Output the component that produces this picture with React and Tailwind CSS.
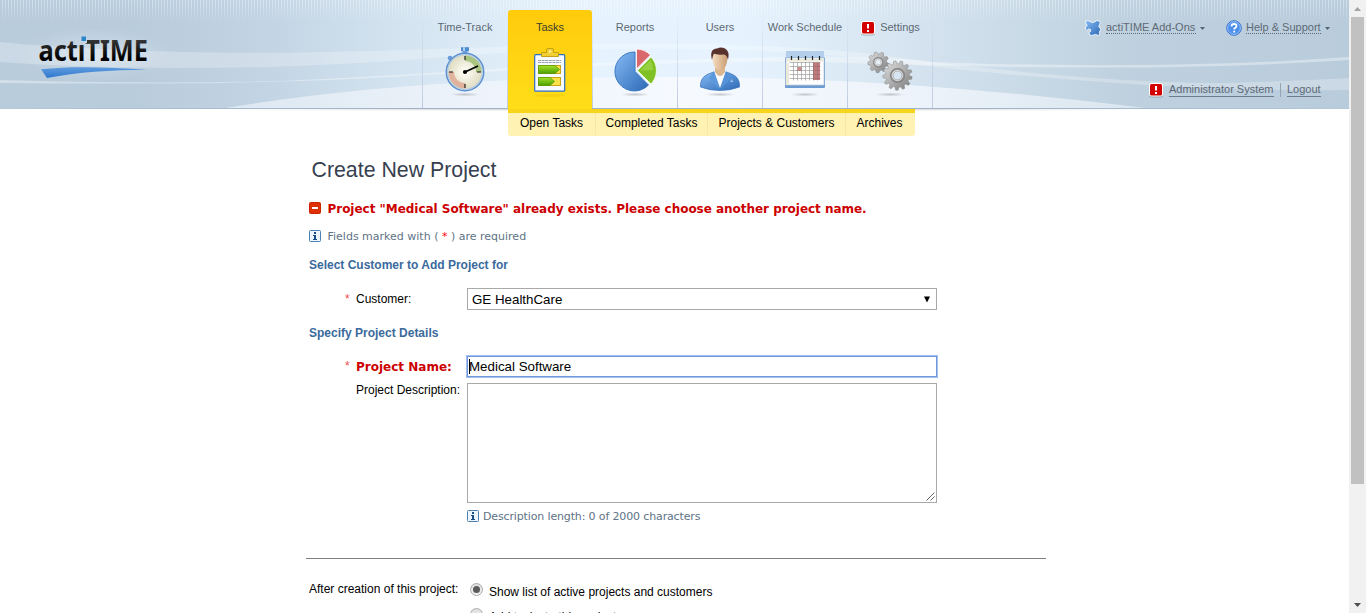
import React from "react";

const ARIAL = "font-['Liberation_Sans',Arial,sans-serif]";
const VERDANA = "font-['DejaVu_Sans',Verdana,sans-serif]";

function HeaderBackdrop() {
  return (
    <svg className="absolute inset-0" width="1349" height="113" viewBox="0 0 1349 113" aria-hidden="true">
      <defs>
        <linearGradient id="sky" x1="0" x2="1" y1="0" y2="0">
          <stop offset="0" stopColor="#b9ccdc" />
          <stop offset=".1" stopColor="#b9ccdc" />
          <stop offset=".2" stopColor="#c3d4e4" />
          <stop offset=".3" stopColor="#d4e4f0" />
          <stop offset=".43" stopColor="#e6f3fe" />
          <stop offset=".55" stopColor="#e6f3fe" />
          <stop offset=".69" stopColor="#d3e2ee" />
          <stop offset=".83" stopColor="#bfd1df" />
          <stop offset="1" stopColor="#b9ccdc" />
        </linearGradient>
        <linearGradient id="fade" x1="0" x2="0" y1="0" y2="1">
          <stop offset="0" stopColor="#fff" stopOpacity=".42" />
          <stop offset="1" stopColor="#fff" stopOpacity="0" />
        </linearGradient>
        <pattern id="stripes" width="3" height="22" patternUnits="userSpaceOnUse">
          <rect x="2" width="1" height="22" fill="url(#fade)" />
        </pattern>
        <linearGradient id="hill" x1="0" x2="1" y1="0" y2="0">
          <stop offset="0" stopColor="#dce7f1" />
          <stop offset=".25" stopColor="#ecf2fa" />
          <stop offset=".5" stopColor="#f6faff" />
          <stop offset=".75" stopColor="#edf3fa" />
          <stop offset="1" stopColor="#d9e5ef" />
        </linearGradient>
        <linearGradient id="edge" x1="0" x2="1" y1="0" y2="0">
          <stop offset="0" stopColor="#b4c8da" />
          <stop offset=".3" stopColor="#9eb2c8" />
          <stop offset=".72" stopColor="#9eb2c8" />
          <stop offset="1" stopColor="#b4c8da" />
        </linearGradient>
        <linearGradient id="shade" x1="0" x2="1" y1="0" y2="0">
          <stop offset="0" stopColor="#d4d4d4" stopOpacity="0" />
          <stop offset=".3" stopColor="#d4d4d4" />
          <stop offset=".7" stopColor="#d4d4d4" />
          <stop offset="1" stopColor="#d4d4d4" stopOpacity="0" />
        </linearGradient>
        <radialGradient id="halo">
          <stop offset="0" stopColor="#fff" stopOpacity=".32" />
          <stop offset="1" stopColor="#fff" stopOpacity="0" />
        </radialGradient>
      </defs>
      <rect width="1349" height="109" fill="url(#sky)" />
      <rect width="1349" height="22" fill="url(#stripes)" />
      <path d="M0 42C70 49 180 53 260 53C390 52 530 44 640 44C780 44 850 50 932 62C1010 71 1110 82 1220 83C1270 82 1310 80 1349 78V90C1220 92 1050 82 850 57C720 45 560 46 420 59C330 66 250 68 170 68C110 67 50 66 0 62Z" fill="#fff" opacity=".25" />
      <path d="M0 80C100 83 200 83 280 81C440 74 560 63 680 60C800 56 870 55 932 62C1040 66 1200 68 1349 57V60C1200 70 1040 69 850 63C720 58 580 67 420 75C330 82 180 85 0 83Z" fill="#fff" opacity=".36" />
      <path d="M225 108C340 89 480 77 670 77C840 77 980 88 1145 108Z" fill="url(#hill)" />
      <ellipse cx="95" cy="54" rx="78" ry="27" fill="url(#halo)" />
      <rect y="108" width="1349" height="1" fill="url(#edge)" />
      <rect x="230" y="109" width="910" height="1" fill="url(#shade)" opacity=".8" />
      <rect x="230" y="110" width="910" height="1" fill="url(#shade)" opacity=".35" />
    </svg>
  );
}

function Logo() {
  return (
    <svg width="130" height="60" viewBox="30 25 130 60" role="img" className="overflow-visible">
      <defs>
        <linearGradient id="ink" x1="0" x2="0" y1="0" y2="1">
          <stop offset=".2" stopColor="#3c3c3c" />
          <stop offset=".75" stopColor="#000" />
        </linearGradient>
        <linearGradient id="swoosh" x1="0" x2="0" y1="0" y2="1">
          <stop offset="0" stopColor="#5e9bdd" />
          <stop offset="1" stopColor="#2f78cf" />
        </linearGradient>
        <clipPath id="undot"><path d="M30 25H79V43H87V25H160V85H30Z" /></clipPath>
      </defs>
      <g clipPath="url(#undot)">
        <text x="38.5" y="60.5" fontSize="29" fontWeight="700" fill="url(#ink)" textLength="109.5" lengthAdjust="spacingAndGlyphs" className="font-['Noto_Sans',sans-serif]">actiTIME</text>
      </g>
      <path d="M81.500 36.500h4.500v4.500h-4.500z" fill="#2b87cb" />
      <path d="M41 69.300C70 66 108 67 147 69.700C110 70 78 72 47 78Z" fill="url(#swoosh)" />
    </svg>
  );
}

function Shadow() {
  return <ellipse cx="24" cy="50.500" rx="15" ry="2" fill="url(#iconShadow)" />;
}

function IconDefs() {
  return (
    <svg width="0" height="0" className="absolute" aria-hidden="true">
      <defs>
        <radialGradient id="iconShadow">
          <stop offset="0" stopColor="#555" stopOpacity=".3" />
          <stop offset="1" stopColor="#555" stopOpacity="0" />
        </radialGradient>
        <linearGradient id="green" x1="0" x2="0" y1="0" y2="1">
          <stop offset="0" stopColor="#a5e02c" />
          <stop offset="1" stopColor="#4c9f05" />
        </linearGradient>
        <linearGradient id="blue" x1="0" x2="1" y1="0" y2="1">
          <stop offset="0" stopColor="#85baf4" />
          <stop offset="1" stopColor="#2c69b5" />
        </linearGradient>
        <linearGradient id="metal" x1="0" x2="1" y1="0" y2="1">
          <stop offset="0" stopColor="#e4e4e4" />
          <stop offset="1" stopColor="#7a7a7a" />
        </linearGradient>
        <radialGradient id="face">
          <stop offset="0" stopColor="#fffff8" />
          <stop offset="1" stopColor="#dcd9bd" />
        </radialGradient>
        <linearGradient id="skin" x1="0" x2="1" y1="0" y2="0">
          <stop offset="0" stopColor="#f6dcc0" />
          <stop offset="1" stopColor="#c99d73" />
        </linearGradient>
      </defs>
    </svg>
  );
}

function Stopwatch() {
  return (
    <svg width="48" height="54" viewBox="0 0 48 54">
      <Shadow />
      <path d="M20 3.200h8v4h-8z" fill="#4f8bcf" /><path d="M22 3.200h2v4h-2z" fill="#acd0f4" />
      <path d="M21.500 7h5v3h-5z" fill="#6b9fd9" />
      <circle cx="9" cy="14" r="2.300" fill="#659cdb" />
      <circle cx="24" cy="28" r="18.700" fill="url(#face)" stroke="#5b90d3" strokeWidth="1.500" />
      <circle cx="24" cy="28" r="17.300" fill="none" stroke="#a8cbf2" />
      <path d="M24 11.500A16.500 16.500 0 0 1 40.500 28H35A11 11 0 0 0 24 17Z" fill="#9dbf72" opacity=".85" />
      <path d="M24 44.500A16.500 16.500 0 0 1 7.500 28H13A11 11 0 0 0 24 39Z" fill="#dfa995" opacity=".85" />
      <path d="M24 12v4M24 40v4M8 28h4M36 28h4" stroke="#111" strokeWidth="1.100" />
      <path d="M24 28L37 22" stroke="#000" strokeWidth="1.800" /><circle cx="24" cy="28" r="2.100" />
    </svg>
  );
}

function Clipboard() {
  return (
    <svg width="48" height="54" viewBox="0 0 48 54">
      <ellipse cx="24" cy="51.500" rx="15" ry="1.500" fill="#b78a00" opacity=".12" />
      <rect x="8.700" y="10.700" width="30" height="36.500" rx="1" fill="#f7faff" stroke="#2d6fc0" strokeWidth="1.200" />
      <path d="M15.500 12.500V8.500h5V6q0-1.500 1.500-1.500h4q1.500 0 1.500 1.500v2.500h5v4Z" fill="#f0cf35" stroke="#c29a0a" strokeWidth=".9" />
      <circle cx="24" cy="7.500" r="1.300" fill="#fff3a6" />
      <path d="M12 16.500h23M12 18.500h23" stroke="#9099a5" strokeWidth=".9" strokeDasharray="3 .6" />
      <rect x="12.500" y="21.500" width="22" height="8" fill="#fbe14b" stroke="#cda514" />
      <path d="M12.500 21.500H29L33.500 25.500L29 29.500H12.500Z" fill="url(#green)" stroke="#4b9a05" strokeWidth=".7" />
      <rect x="12.500" y="33.500" width="22" height="8" fill="#fbe14b" stroke="#cda514" />
      <path d="M12.500 33.500H24L28.500 37.500L24 41.500H12.500Z" fill="url(#green)" stroke="#4b9a05" strokeWidth=".7" />
    </svg>
  );
}

function Pie() {
  return (
    <svg width="48" height="54" viewBox="0 0 48 54">
      <Shadow />
      <path d="M24 27.500V8A19.500 19.500 0 1 0 37.500 41Z" fill="url(#blue)" stroke="#3b78c2" />
      <path d="M25.500 25V5A20 20 0 0 1 39.500 11Z" fill="#d9686d" stroke="#fff" strokeWidth=".8" />
      <path d="M26.500 26.500L40 13A19.500 19.500 0 0 1 40 40Z" fill="#7fc124" stroke="#f8fff0" strokeWidth=".8" />
      <path d="M29 26.500L39.500 16A17 17 0 0 1 42 26Z" fill="#a6da55" opacity=".6" />
    </svg>
  );
}

function Person() {
  return (
    <svg width="48" height="54" viewBox="0 0 48 54">
      <Shadow />
      <path d="M4.500 43C4 34 9 30.500 18 28H30C39 30.500 44 34 43.500 43Q34 46.500 24 46.500Q14 46.500 4.500 43Z" fill="url(#blue)" stroke="#3772b7" strokeWidth=".7" />
      <path d="M18 27L24 44L30 27Z" fill="#f9fbff" />
      <path d="M18 27L23.500 45L13 34Z" fill="#5b98dc" /><path d="M30 27L24.500 45L35 34Z" fill="#5592d8" />
      <path d="M19 22h10v6q-5 8-10 0Z" fill="#dbb68f" />
      <path d="M16.500 10Q16 25 24 26.500Q32 25 31.500 10Q28 6 21 7Z" fill="url(#skin)" />
      <path d="M16 16Q13 5 21 4.500Q25 2.500 29 4.500Q34 7 32 16Q31 11 28 10.500Q20 11 18 9.500Q17 11 16 16Z" fill="#5a322d" />
      <path d="M34 38l3 0-1-3Z" fill="#9bc1ee" />
    </svg>
  );
}

function Calendar() {
  return (
    <svg width="48" height="54" viewBox="0 0 48 54">
      <Shadow />
      <rect x="5" y="7" width="38" height="37" fill="#b3cfec" />
      <path d="M4 13.500h40v29.500q0 1-1 1H5q-1 0-1-1Z" fill="#6d9bd0" />
      <path d="M5 14h38v27H5Z" fill="#fff" stroke="#b9cce2" strokeWidth=".8" />
      <path d="M8 19H4.800V41h3.200Z" fill="#ede9d8" />
      <path d="M5.500 14.500h37v3h-37z" fill="#ebe9da" />
      <path d="M32 18.500h7v17.500h-7z" fill="#ca777b" /><path d="M16.500 23h4v4h-4z" fill="#d28a8a" />
      <path d="M8.500 18.500h31M8.500 22.500h31M8.500 26.500h31M8.500 30.500h31M8.500 34.500h31M12.500 18v18.500M16.500 18v18.500M20.500 18v18.500M24.500 18v18.500M28.500 18v18.500M32.500 18v18.500M36.500 18v18.500" stroke="#747474" strokeWidth=".7" opacity=".7" />
      <path d="M10.500 12v4M17.500 12v4M24.500 12v4M31.500 12v4M38.500 12v4" stroke="#252525" strokeWidth="1.200" />
    </svg>
  );
}

function Gear({ x, y, r, hole, teeth }) {
  const d = [];
  for (let i = 0; i < teeth; i++) {
    const at = (f, q) => {
      const a = ((i + f) / teeth) * Math.PI * 2;
      return `${(x + Math.cos(a) * q).toFixed(2)} ${(y + Math.sin(a) * q).toFixed(2)}`;
    };
    d.push(at(0, r * 0.8), at(0.18, r), at(0.52, r), at(0.7, r * 0.8));
  }
  return (
    <g>
      <path d={`M${d.join("L")}ZM${x - hole} ${y}a${hole} ${hole} 0 1 0 ${hole * 2} 0a${hole} ${hole} 0 1 0 ${-hole * 2} 0Z`} fill="url(#metal)" fillRule="evenodd" stroke="#808080" strokeWidth=".5" />
      <circle cx={x} cy={y} r={hole + r * 0.16} fill="none" stroke="#858585" strokeWidth={r * 0.1} />
      <circle cx={x} cy={y} r={hole + r * 0.04} fill="none" stroke="#e5e5e5" strokeWidth=".8" />
    </g>
  );
}

function Gears() {
  return (
    <svg width="48" height="54" viewBox="0 0 48 54">
      <Shadow />
      <Gear x={12.300} y={18.300} r={10.500} hole={3} teeth={9} />
      <Gear x={31.500} y={31.500} r={14.700} hole={4.500} teeth={13} />
    </svg>
  );
}

function Alert() {
  return (
    <svg width="16" height="16" viewBox="0 0 16 16" className="shrink-0">
      <rect x="1" y="1.500" width="14" height="14" rx="2.500" fill="#000" opacity=".25" />
      <rect x="1" y="1" width="14" height="13.500" rx="2.500" fill="#fff" />
      <rect x="2" y="2" width="12" height="11.500" rx="1.500" fill="#d20000" />
      <path d="M7 4h2v4.500H7zM7 10h2v2H7z" fill="#fff" />
    </svg>
  );
}

function Info() {
  return (
    <svg width="12" height="12" viewBox="0 0 12 12" className="shrink-0">
      <rect x=".5" y=".5" width="11" height="11" rx="1" fill="#edf5fd" stroke="#4d80b0" />
      <path d="M5 2h2v2H5zM4 5h3v4h1v1H4V9h1V6H4z" fill="#174d87" />
    </svg>
  );
}

function Puzzle() {
  return (
    <svg width="18" height="18" viewBox="0 0 18 18" className="shrink-0">
      <path d="M1.500 2Q4 .8 6 2.500Q8.500 4.800 11 2.500Q12.500 .8 15.500 2Q17 3.500 15.500 5.500Q13.800 8 16 9Q17.500 10.500 16 12Q14.500 13.500 16 15Q15.500 17.200 13 16Q11.500 14.800 10 16Q7.500 17.200 5 15.500V13.500Q7.500 12.500 6.500 10.500Q4.500 9 3 11.500Q.5 10.500 1.500 8Q4.500 6.500 2 4.500Z" fill="url(#blue)" stroke="#eef5fc" />
    </svg>
  );
}

function Help() {
  return (
    <svg width="16" height="16" viewBox="0 0 16 16" className="shrink-0">
      <circle cx="8" cy="8" r="7.300" fill="#4f90ed" stroke="#3a70c8" />
      <circle cx="8" cy="8" r="6.400" fill="none" stroke="#a9cdfb" strokeWidth=".8" />
      <path d="M5.500 6.300Q5.700 4 8.100 4Q10.600 4 10.500 6Q10.400 7.200 9.200 7.900Q8.200 8.500 8.200 9.500M8.200 10.800v1.700" fill="none" stroke="#fff" strokeWidth="1.800" />
    </svg>
  );
}

function Caret() {
  return <svg width="5" height="3" viewBox="0 0 5 3" className="shrink-0"><path d="M0 0h5L2.500 3Z" fill="#56636f" /></svg>;
}

const TABS = [
  ["Time-Track", Stopwatch],
  ["Tasks", Clipboard],
  ["Reports", Pie],
  ["Users", Person],
  ["Work Schedule", Calendar],
  ["Settings", Gears],
];

function Tab({ label, Icon }) {
  const active = label === "Tasks";
  return (
    <div className="flex w-[85px] shrink-0 pt-2.5">
      <div className={`flex flex-1 flex-col items-center ${active ? "h-[103px] rounded-t-[3px] bg-linear-to-b from-[#ffcb0b] to-[#ffde18]" : "h-[98px]"}`}>
        <div className={`mt-[9px] flex h-4 items-center gap-1 whitespace-nowrap pt-px text-[11px] ${active ? "text-[#3c3c2c]" : "text-[#5d6975]"}`}>
          {label === "Settings" && <Alert />}
          <span>{label}</span>
        </div>
        <div className="mt-[9px] h-[54px]"><Icon /></div>
      </div>
      <div className="h-[98px] w-px bg-linear-to-b from-transparent to-[#bfcbe2]" />
    </div>
  );
}

function SubNav() {
  const items = [["Open Tasks", "w-[87px]"], ["Completed Tasks", "w-[112px]"], ["Projects & Customers", "w-[138px]"], ["Archives", "w-[68px]"]];
  return (
    <div className="ml-[508px] flex h-[27px] w-[407px] rounded-b-[3px] border-t-4 border-[#f8d51a] bg-[#fff2b2] text-[12px] text-black">
      {items.map(([t, w], i) => (
        <div key={t} className={`${w} flex h-[22px] items-center justify-center whitespace-nowrap pb-[3px] ${i ? "border-l border-[#f7e7a2]" : ""}`}>{t}</div>
      ))}
    </div>
  );
}

function Header() {
  return (
    <header className="relative h-[136px]">
      <HeaderBackdrop />
      <div className="relative flex h-[109px]">
        <div className="w-[422px] pl-[30px] pt-[25px]"><Logo /></div>
        <div className="mt-2.5 h-[98px] w-px bg-linear-to-b from-transparent to-[#bfcbe2]" />
        <nav className="flex">{TABS.map(([l, I]) => <Tab key={l} label={l} Icon={I} />)}</nav>
        <div className="flex flex-1 flex-col text-[11px] leading-[13px] text-[#5d6975]">
          <div className="flex h-9 items-end whitespace-nowrap pl-[151px]">
            <span className="-mb-px flex"><Puzzle /></span>
            <span className="mb-[2px] ml-1 w-[90px] border-b border-dotted border-[#5d6975] leading-[11px]">actiTIME Add-Ons</span>
            <span className="mb-[6px] ml-1 flex"><Caret /></span>
            <span className="ml-[21px] flex"><Help /></span>
            <span className="mb-[2px] ml-1 w-[75px] border-b border-dotted border-[#5d6975] leading-[11px]">Help &amp; Support</span>
            <span className="mb-[6px] ml-1 flex"><Caret /></span>
          </div>
          <div className="mt-[46px] flex h-4 items-center whitespace-nowrap pl-[215px]">
            <Alert />
            <span className="ml-[5px] w-[105px] border-b border-[#6f7d8b]">Administrator System</span>
            <span className="mx-[6px] h-3.5 w-px bg-[#98a3b1]" />
            <span className="border-b border-[#6f7d8b]">Logout</span>
          </div>
        </div>
      </div>
      <div className="relative"><SubNav /></div>
    </header>
  );
}

function Scrollbar() {
  return (
    <div className="flex h-full w-[17px] shrink-0 flex-col items-center justify-between bg-[#f1f1f1]">
      <div className="flex h-[17px] items-center"><svg width="7" height="4" viewBox="0 0 7 4"><path d="M0 4L3.500 0L7 4Z" fill="#a3a3a3" /></svg></div>
      <div className="h-[467px] w-[13px] bg-[#c1c1c1]" />
      <div className="flex-1" />
      <div className="flex h-[17px] items-center"><svg width="7" height="4" viewBox="0 0 7 4"><path d="M0 0h7L3.500 4Z" fill="#505050" /></svg></div>
    </div>
  );
}

function Radio({ on }) {
  return (
    <span className="flex h-[13px] w-[13px] shrink-0 items-center justify-center rounded-full border border-[#ababab] bg-linear-to-b from-[#dedede] to-[#f4f4f4]">
      {on && <span className="h-[7px] w-[7px] rounded-full bg-[#5a5a5a]" />}
    </span>
  );
}

function Section({ children }) {
  return <h2 className="ml-[3px] flex h-4 items-center text-[12px] font-bold text-[#3a6a9c]">{children}</h2>;
}

export default function App() {
  return (
    <div className={`flex h-[613px] w-[1366px] overflow-hidden bg-white ${ARIAL}`}>
      <IconDefs />
      <div className="h-full w-[1349px] shrink-0 overflow-hidden">
        <Header />
        <main className="w-[1046px] pl-[306px] text-[12px] text-black">
          <h1 className="ml-[5.500px] mt-[22px] flex h-[26px] items-center text-[21.33px] text-[#36404f]">Create New Project</h1>
          <div className={`ml-[3px] mt-[16px] flex h-4 items-center whitespace-nowrap text-[12px] font-bold tracking-[-0.03px] text-[#cc0000] ${VERDANA}`}>
            <svg width="12" height="12" viewBox="0 0 12 12"><rect width="12" height="12" rx="2" fill="#c92600" /><rect x="1" y="1" width="10" height="10" rx="1" fill="#de3108" /><path d="M3 5h6v2H3z" fill="#fff" /></svg>
            <span className="ml-[6.500px] pt-px">Project "Medical Software" already exists. Please choose another project name.</span>
          </div>
          <div className={`ml-[3px] mt-3 flex h-4 items-center whitespace-nowrap text-[11px] text-[#5e7385] ${VERDANA}`}>
            <Info />
            <span className="ml-[6.500px] pt-0.5">Fields marked with ( <span className="text-[#f00]">*</span> ) are required</span>
          </div>
          <div className="mt-[13px]"><Section>Select Customer to Add Project for</Section></div>
          <div className="mt-[15px] flex h-[22px]">
            <span className="w-[50px] pl-[39px] pt-[2px] text-[#f05050]">*</span>
            <span className="w-[111px] pt-[2px]">Customer:</span>
            <div className="flex w-[470px] items-center justify-between border border-[#a9a9a9] pl-1 pr-[6px] text-[13.33px]">
              <span className="pt-px">GE HealthCare</span>
              <svg width="6" height="7" viewBox="0 0 6 7"><path d="M0 .5h6L3 6.500Z" /></svg>
            </div>
          </div>
          <div className="mt-[15px]"><Section>Specify Project Details</Section></div>
          <div className="mt-[14px] flex h-[22px]">
            <span className="w-[50px] pl-[39px] pt-0.5 text-[#f05050]">*</span>
            <span className={`w-[110px] whitespace-nowrap pt-[3px] text-[12px] font-bold text-[#cc0000] ${VERDANA}`}>Project Name:</span>
            <div className="flex h-[23px] w-[472px] items-center border border-[#a4c0f0] pl-0.5 text-[13.33px] shadow-[inset_0_0_0_1px_#7099da]">
              <span className="h-[15px] w-px bg-black" /><span className="-ml-px pt-px">Medical Software</span>
            </div>
          </div>
          <div className="mt-[6px] flex h-[120px]">
            <span className="w-[161px] whitespace-nowrap pl-[50px] leading-[14px]">Project Description:</span>
            <div className="flex w-[470px] items-end justify-end border border-[#a9a9a9] p-px">
              <svg width="9" height="9" viewBox="0 0 9 9"><path d="M.5 8.500l8-8M4.500 8.500l4-4" stroke="#555" strokeWidth=".9" /></svg>
            </div>
          </div>
          <div className={`ml-[161px] mt-[5px] flex h-4 items-center whitespace-nowrap text-[11px] tracking-[-0.14px] text-[#5e7385] ${VERDANA}`}>
            <Info /><span className="ml-1 pt-0.5">Description length: 0 of 2000 characters</span>
          </div>
          <div className="mt-[34px] h-px w-[740px] bg-[#808080]" />
          <div className="flex pt-[21px]">
            <span className="w-[164px] whitespace-nowrap pl-[3px]">After creation of this project:</span>
            <div className="flex flex-col gap-[8px]">
              <div className="flex h-[17px] items-start gap-1.5 whitespace-nowrap pt-[3px]"><Radio on /><span>Show list of active projects and customers</span></div>
              <div className="flex h-[17px] items-start gap-1.5 whitespace-nowrap pt-[3px]"><Radio /><span>Add tasks to this project</span></div>
            </div>
          </div>
        </main>
      </div>
      <Scrollbar />
    </div>
  );
}
